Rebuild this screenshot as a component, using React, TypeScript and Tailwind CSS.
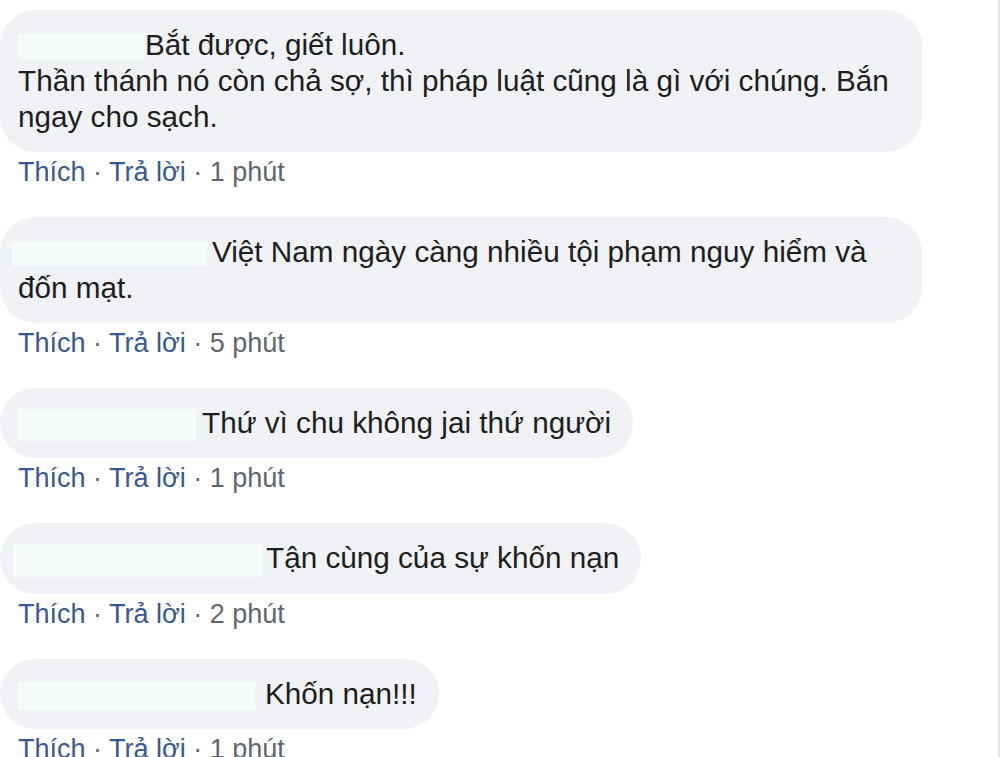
import React from "react";

type Comment = {
  mask: string;
  lines: string[];
  time: string;
};

const comments: Comment[] = [
  {
    mask: "w-[127px] h-[26px]",
    lines: ["Bắt được, giết luôn.", "Thần thánh nó còn chả sợ, thì pháp luật cũng là gì với chúng. Bắn", "ngay cho sạch."],
    time: "1 phút",
  },
  {
    mask: "w-[195px] h-[24px] -ml-[6px] mr-[5px]",
    lines: ["Việt Nam ngày càng nhiều tội phạm nguy hiểm và", "đốn mạt."],
    time: "5 phút",
  },
  {
    mask: "w-[178px] h-[32px] mr-[6px]",
    lines: ["Thứ vì chu không jai thứ người"],
    time: "1 phút",
  },
  {
    mask: "w-[249px] h-[33px] -ml-[5px] mr-[4px]",
    lines: ["Tận cùng của sự khốn nạn"],
    time: "2 phút",
  },
  {
    mask: "w-[237px] h-[28px] mr-[10px]",
    lines: ["Khốn nạn!!!"],
    time: "1 phút",
  },
];

const Bubble = ({ c }: { c: Comment }) => {
  // wrapped comments fill the max width of the bubble
  const wide = c.lines.length > 1;
  return (
    <div className="flex flex-col items-start">
      <div
        className={`${
          wide ? "w-[922px]" : ""
        } max-w-[922px] rounded-[36px] bg-[#f0f2f5] py-[17px] pl-[18px] pr-[22px] text-[29.7px] leading-[36px] text-[#1c1e21] whitespace-nowrap`}
      >
        {c.lines.map((line, i) => (
          <div key={i}>
            {i === 0 ? (
              <span className={`inline-block align-middle bg-[#f5fbfa] ${c.mask}`}></span>
            ) : null}
            {line}
          </div>
        ))}
      </div>
      <div className="mt-[4px] mb-[29px] pl-[18px] text-[27px] leading-[32px]">
        <span className="text-[#385898]">Thích</span>
        <span className="text-[#606770]"> · </span>
        <span className="text-[#385898]">Trả lời</span>
        <span className="text-[#606770]"> · {c.time}</span>
      </div>
    </div>
  );
};

export default function App() {
  return (
    <div className="h-[757px] w-[1000px] overflow-hidden bg-white font-['Liberation_Sans',Arial,sans-serif]">
      <div className="h-full w-[1000px] border-r-2 border-[#e2e2e2] pt-[10px]">
        {comments.map((c, i) => (
          <Bubble key={i} c={c} />
        ))}
      </div>
    </div>
  );
}
